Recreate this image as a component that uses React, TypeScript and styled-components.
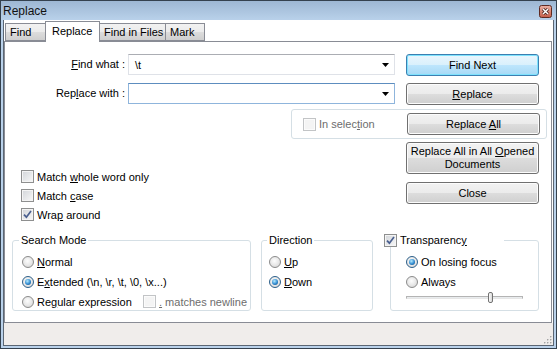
import React from "react";
import styled, { createGlobalStyle } from "styled-components";

const GlobalStyle = createGlobalStyle`
  html, body {
    margin: 0;
    padding: 0;
    background: #fff;
  }
  body {
    font-family: "Liberation Sans", Arial, sans-serif;
    font-size: 11px;
    color: #000;
  }
  * {
    box-sizing: border-box;
  }
`;

const Frame = styled.div`
  width: 557px;
  height: 349px;
  display: flex;
  flex-direction: column;
  border: 1px solid #34414e;
  background: #b9d1ea;
`;

const TitleBar = styled.div`
  height: 19px;
  flex-shrink: 0;
  display: flex;
  align-items: center;
  justify-content: space-between;
  padding: 1px 4px 0 2px;
  background: linear-gradient(#9db7d3, #b9d1ea);
  font-size: 12px;
  color: #111;
`;

const CloseBox = styled.span`
  width: 13px;
  height: 13px;
  display: flex;
`;

const Client = styled.div`
  flex: 1;
  display: flex;
  flex-direction: column;
  margin: 0 2px 2px 2px;
  border: 1px solid #5b6673;
  border-top: none;
  background: #fff;
`;

const TabRow = styled.div`
  height: 21px;
  flex-shrink: 0;
  display: flex;
  align-items: flex-end;
  padding-left: 1px;
`;

const Tab = styled.div<{ $active?: boolean; $w: number; $gap?: number }>`
  width: ${p => p.$w}px;
  height: ${p => (p.$active ? 21 : 18)}px;
  margin-left: ${p => p.$gap ?? -1}px;
  margin-bottom: ${p => (p.$active ? -1 : 0)}px;
  padding-left: ${p => (p.$active ? 6 : 4)}px;
  padding-bottom: ${p => (p.$active ? 2 : 0)}px;
  display: flex;
  align-items: center;
  border: 1px solid #898c95;
  border-bottom: ${p => (p.$active ? "none" : "1px solid #898c95")};
  background: ${p => (p.$active ? "#fff" : "linear-gradient(#f2f2f2, #ebebeb 50%, #dddddd 50%, #cfcfcf)")};
  position: relative;
  z-index: ${p => (p.$active ? 1 : 0)};
  white-space: nowrap;
`;

const Panel = styled.div`
  flex: 1;
  display: flex;
  flex-direction: column;
  margin-right: 1px;
  padding-top: 12px;
  border: 1px solid #898c95;
`;

const FieldRow = styled.div<{ $mt?: number }>`
  display: flex;
  align-items: flex-start;
  height: 22px;
  margin-top: ${p => p.$mt ?? 0}px;
`;

const FieldLabel = styled.div`
  width: 120px;
  line-height: 21px;
  text-align: right;
`;

const Combo = styled.div<{ $focus?: boolean }>`
  width: 267px;
  height: 21px;
  margin: 0 11px 0 3px;
  padding: 0 5px 0 6px;
  display: flex;
  align-items: center;
  justify-content: space-between;
  border: 1px solid ${p => (p.$focus ? "#8fb5dc" : "#dfe2e8")};
  border-top-color: ${p => (p.$focus ? "#5d8dbf" : "#abadb3")};
  background: #fff;
`;

const Button = styled.button<{ $primary?: boolean; $h?: number }>`
  width: 133px;
  height: ${p => p.$h ?? 22}px;
  flex-shrink: 0;
  padding: 0;
  font: inherit;
  line-height: 13px;
  color: #000;
  border: 1px solid ${p => (p.$primary ? "#3c7fb1" : "#707070")};
  border-radius: 3px;
  background: ${p =>
    p.$primary
      ? "linear-gradient(#eaf6fd, #d9f0fc 50%, #bee6fd 50%, #a7d9f5)"
      : "linear-gradient(#f2f2f2, #ebebeb 50%, #dddddd 50%, #cfcfcf)"};
  box-shadow: inset 0 0 0 1px ${p => (p.$primary ? "#7ee2fd" : "#fcfcfc")};
`;

const SelectionGroup = styled.div`
  width: 256px;
  height: 30px;
  margin: 4px 0 0 286px;
  padding: 0 6px 0 11px;
  display: flex;
  align-items: center;
  justify-content: space-between;
  border: 1px solid #d5dfe5;
  border-radius: 3px;
`;

const CheckLabel = styled.label<{ $disabled?: boolean }>`
  display: flex;
  align-items: center;
  gap: 3px;
  height: 13px;
  white-space: nowrap;
  color: ${p => (p.$disabled ? "#6d6d6d" : "#000")};
`;

const CheckBox = styled.span<{ $disabled?: boolean }>`
  width: 13px;
  height: 13px;
  flex-shrink: 0;
  display: flex;
  align-items: center;
  justify-content: center;
  border: 1px solid ${p => (p.$disabled ? "#c2c4c6" : "#8e8f8f")};
  background: ${p =>
    p.$disabled ? "#f4f4f4" : "linear-gradient(135deg, #d2d5d9, #f8f8f8)"};
  box-shadow: inset 0 0 0 1px ${p => (p.$disabled ? "#fbfbfb" : "#f4f4f4")};
`;

const OptionsRow = styled.div`
  display: flex;
  margin-top: 3px;
`;

const CheckList = styled.div`
  width: 401px;
  padding: 28px 0 0 16px;
  display: flex;
  flex-direction: column;
  gap: 6px;
`;

const ButtonColumn = styled.div`
  display: flex;
  flex-direction: column;
  gap: 8px;
`;

const GroupsRow = styled.div`
  display: flex;
  margin-top: 13px;
`;

const Group = styled.fieldset<{ $w: number; $ml: number; $pl: number }>`
  width: ${p => p.$w}px;
  height: 77px;
  min-width: 0;
  margin: 0 0 0 ${p => p.$ml}px;
  padding: 8px 0 0 ${p => p.$pl}px;
  border: 1px solid #d5dfe5;
  border-radius: 3px;
  display: flex;
  flex-direction: column;
  gap: 7px;
`;

const Legend = styled.legend<{ $offset: number; $w?: number }>`
  margin-left: ${p => p.$offset}px;
  padding: ${p => (p.$w ? "0" : "0 2px")};
  line-height: 13px;
  ${p => (p.$w ? `width: ${p.$w}px;` : "")}
`;

const RadioRow = styled.label`
  display: flex;
  align-items: center;
  gap: 3px;
  height: 13px;
  white-space: nowrap;
`;

const Radio = styled.span<{ $checked?: boolean }>`
  width: 12px;
  height: 12px;
  flex-shrink: 0;
  border-radius: 50%;
  display: flex;
  align-items: center;
  justify-content: center;
  border: 1px solid ${p => (p.$checked ? "#2c5f8a" : "#8b8b8b")};
  background: radial-gradient(circle at 45% 40%, #fdfdfd 0, #e6e6e6 55%, #cdcdcd 100%);

  &::after {
    content: "";
    display: ${p => (p.$checked ? "block" : "none")};
    width: 6px;
    height: 6px;
    border-radius: 50%;
    background: radial-gradient(circle at 40% 35%, #b6ebff 0, #2f8ad0 55%, #0d3f70 100%);
  }
`;

const RadioText = styled.span<{ $w?: number }>`
  ${p => (p.$w ? `width: ${p.$w}px;` : "")}
`;

const Slider = styled.div`
  position: relative;
  width: 117px;
  height: 11px;
  margin-top: -3px;
  display: flex;
  align-items: center;
`;

const Track = styled.div`
  width: 100%;
  height: 3px;
  border: 1px solid #b4b4b4;
  border-bottom-color: #e6e6e6;
  background: #e9ecee;
`;

const Thumb = styled.div`
  position: absolute;
  top: 0;
  width: 5px;
  height: 11px;
  border: 1px solid #727272;
  border-radius: 2px;
  background: linear-gradient(90deg, #fbfbfb, #d9d9d9);
`;

const StatusBar = styled.div`
  height: 22px;
  flex-shrink: 0;
  display: flex;
  align-items: flex-end;
  justify-content: flex-end;
  padding: 0 1px 1px 0;
  background: #f0edeb;
`;

function Check({ checked, disabled }: { checked?: boolean; disabled?: boolean }) {
  return (
    <CheckBox $disabled={disabled}>
      {checked && (
        <svg width="9" height="9" viewBox="0 0 9 9">
          <path d="M1 4.6 L3.4 7.2 L8 1" fill="none" stroke="#4a5f8f" strokeWidth="1.7" />
        </svg>
      )}
    </CheckBox>
  );
}

function Arrow() {
  return (
    <svg width="7" height="4" viewBox="0 0 7 4">
      <polygon points="0,0 7,0 3.5,4" fill="#000" />
    </svg>
  );
}

export default function App() {
  const transparency = 0.73;

  return (
    <>
      <GlobalStyle />
      <Frame>
        <TitleBar>
          <span>Replace</span>
          <CloseBox>
            <svg width="13" height="13" viewBox="0 0 13 13">
              <defs>
                <linearGradient id="cl" x1="0" y1="0" x2="0" y2="1">
                  <stop offset="0" stopColor="#eab2a6" />
                  <stop offset="0.5" stopColor="#d98775" />
                  <stop offset="1" stopColor="#c45d49" />
                </linearGradient>
              </defs>
              <rect x="0.5" y="0.5" width="12" height="12" rx="2" fill="url(#cl)" stroke="#5e2a22" />
              <path d="M4 4 L9 9 M9 4 L4 9" stroke="#3a1712" strokeWidth="3" />
              <path d="M4 4 L9 9 M9 4 L4 9" stroke="#fff" strokeWidth="1.5" />
            </svg>
          </CloseBox>
        </TitleBar>
        <Client>
          <TabRow>
            <Tab $w={41} $gap={0}>Find</Tab>
            <Tab $w={55} $active>Replace</Tab>
            <Tab $w={67}>Find in Files</Tab>
            <Tab $w={40} $gap={-1}>Mark</Tab>
          </TabRow>
          <Panel>
            <FieldRow>
              <FieldLabel>
                <u>F</u>ind what :
              </FieldLabel>
              <Combo>
                <span>{"\\t"}</span>
                <Arrow />
              </Combo>
              <Button $primary>Find Next</Button>
            </FieldRow>
            <FieldRow $mt={7}>
              <FieldLabel>
                Rep<u>l</u>ace with :
              </FieldLabel>
              <Combo $focus>
                <span />
                <Arrow />
              </Combo>
              <Button>
                <u>R</u>eplace
              </Button>
            </FieldRow>
            <SelectionGroup>
              <CheckLabel $disabled>
                <Check disabled />
                <span>
                  In selec<u>t</u>ion
                </span>
              </CheckLabel>
              <Button>
                Replace <u>A</u>ll
              </Button>
            </SelectionGroup>
            <OptionsRow>
              <CheckList>
                <CheckLabel>
                  <Check />
                  <span>
                    Match <u>w</u>hole word only
                  </span>
                </CheckLabel>
                <CheckLabel>
                  <Check />
                  <span>
                    Match <u>c</u>ase
                  </span>
                </CheckLabel>
                <CheckLabel>
                  <Check checked />
                  <span>
                    Wra<u>p</u> around
                  </span>
                </CheckLabel>
              </CheckList>
              <ButtonColumn>
                <Button $h={32}>
                  Replace All in All <u>O</u>pened
                  <br />
                  Documents
                </Button>
                <Button>Close</Button>
              </ButtonColumn>
            </OptionsRow>
            <GroupsRow>
              <Group $w={239} $ml={7} $pl={9}>
                <Legend $offset={-3}>Search Mode</Legend>
                <RadioRow>
                  <Radio />
                  <RadioText>
                    <u>N</u>ormal
                  </RadioText>
                </RadioRow>
                <RadioRow>
                  <Radio $checked />
                  <RadioText>
                    E<u>x</u>tended (\n, \r, \t, \0, \x...)
                  </RadioText>
                </RadioRow>
                <RadioRow>
                  <Radio />
                  <RadioText $w={103}>
                    Re<u>g</u>ular expression
                  </RadioText>
                  <CheckLabel $disabled>
                    <Check disabled />
                    <span>
                      <u>.</u> matches newline
                    </span>
                  </CheckLabel>
                </RadioRow>
              </Group>
              <Group $w={112} $ml={10} $pl={7}>
                <Legend $offset={-2}>Direction</Legend>
                <RadioRow>
                  <Radio />
                  <RadioText>
                    <u>U</u>p
                  </RadioText>
                </RadioRow>
                <RadioRow>
                  <Radio $checked />
                  <RadioText>
                    <u>D</u>own
                  </RadioText>
                </RadioRow>
              </Group>
              <Group $w={149} $ml={17} $pl={15}>
                <Legend $offset={-22} $w={120}>
                  <CheckLabel>
                    <Check checked />
                    <span>
                      Transparenc<u>y</u>
                    </span>
                  </CheckLabel>
                </Legend>
                <RadioRow>
                  <Radio $checked />
                  <RadioText>On losing focus</RadioText>
                </RadioRow>
                <RadioRow>
                  <Radio />
                  <RadioText>Always</RadioText>
                </RadioRow>
                <Slider>
                  <Track />
                  <Thumb style={{ left: Math.round(transparency * (117 - 5)) }} />
                </Slider>
              </Group>
            </GroupsRow>
          </Panel>
          <StatusBar>
            <svg width="8" height="8" viewBox="0 0 8 8">
              {[
                [6, 0],
                [3, 3],
                [6, 3],
                [0, 6],
                [3, 6],
                [6, 6],
              ].map(([x, y]) => (
                <g key={`${x}-${y}`}>
                  <rect x={x + 0.5} y={y + 0.5} width="1.5" height="1.5" fill="#fff" />
                  <rect x={x} y={y} width="1.5" height="1.5" fill="#a3a3a3" />
                </g>
              ))}
            </svg>
          </StatusBar>
        </Client>
      </Frame>
    </>
  );
}
